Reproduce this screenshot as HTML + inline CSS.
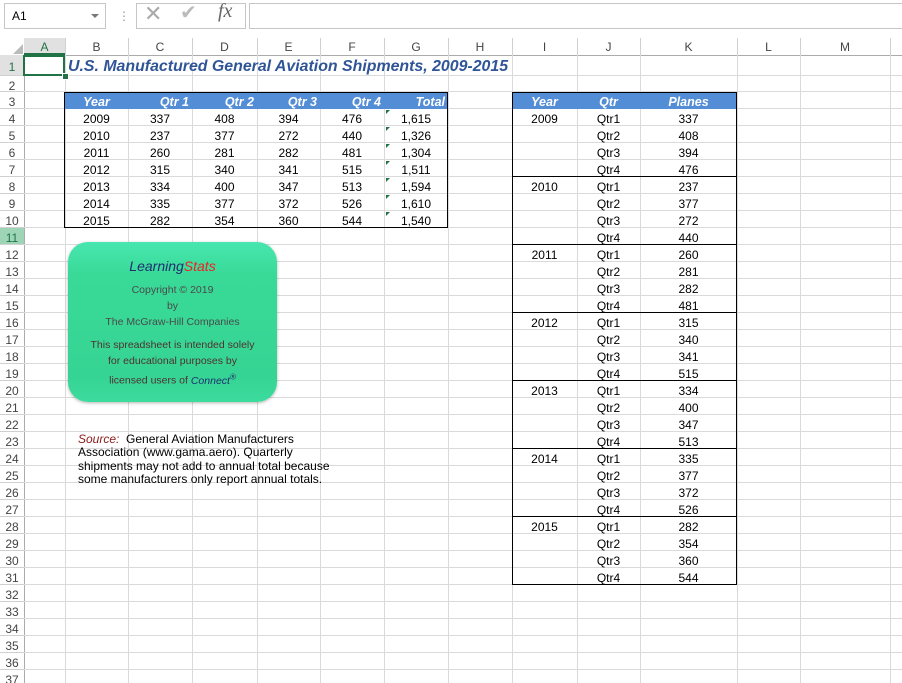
<!DOCTYPE html><html><head><meta charset="utf-8"><style>
html,body{margin:0;width:902px;height:683px;overflow:hidden}
body{background:#fff;font-family:"Liberation Sans",Arial,sans-serif;font-size:12px;position:relative}
.a{position:absolute}
.t{position:absolute;white-space:nowrap;line-height:17px;height:17px}
</style></head><body>
<div class="a" style="left:0;top:0;width:902px;height:38px;background:#fff;border-bottom:1px solid #d4d4d4"></div>
<div class="a" style="left:4px;top:3px;width:100px;height:24px;border:1px solid #c6c6c6"></div>
<div class="t" style="left:12px;top:8px">A1</div>
<div class="a" style="left:91px;top:14px;border:4px solid transparent;border-top:4px solid #777"></div>
<div class="t" style="left:118px;top:8px;color:#999">⋮</div>
<div class="a" style="left:136px;top:3px;width:108px;height:24px;border:1px solid #c6c6c6"></div>
<div class="t" style="left:144px;top:5px;font-size:22px;color:#aaa">✕</div>
<div class="t" style="left:180px;top:5px;font-size:20px;color:#bbb">✔</div>
<div class="t" style="left:218px;top:3px;font-family:'Liberation Serif',serif;font-style:italic;font-size:20px;color:#666">fx</div>
<div class="a" style="left:249px;top:3px;width:660px;height:24px;border:1px solid #c6c6c6"></div>
<div id="g"></div>
<div class="a" style="left:64px;top:92px;width:384px;height:136px;border:1px solid #000;box-sizing:border-box"></div>
<div class="a" style="left:65px;top:93px;width:382px;height:16px;background:#538dd5"></div>
<div class="a" style="left:512px;top:92px;width:225px;height:493px;border:1px solid #000;box-sizing:border-box"></div>
<div class="a" style="left:513px;top:93px;width:223px;height:16px;background:#538dd5"></div>
<div id="c"></div>
<div class="a" style="left:23px;top:55px;width:42px;height:21px;border:2px solid #217346;box-sizing:border-box"></div>
<div class="a" style="left:62px;top:73px;width:5px;height:5px;background:#217346;border:1px solid #fff"></div>
<div class="t" style="left:68px;top:57px;font-size:15.9px;line-height:20px;font-weight:bold;font-style:italic;color:#2f5597">U.S. Manufactured General Aviation Shipments, 2009-2015</div>
<div class="a" style="left:68px;top:242px;width:209px;height:160px;border-radius:20px;background:linear-gradient(#48e6b0,#39da98 20%,#36d494 85%,#3cdc9e);box-shadow:0 1px 3px rgba(0,0,0,.3);text-align:center;color:#4a4a4a;font-size:10.5px;line-height:16px">
<div style="margin-top:14px;font-size:14px;font-style:italic;line-height:20px"><span style="color:#1f2f6f">Learning</span><span style="color:#f02020">Stats</span></div>
<div style="margin-top:6px">Copyright © 2019<br>by<br>The McGraw-Hill Companies</div>
<div style="margin-top:7px;line-height:16px;color:#503030">This spreadsheet is intended solely<br>for educational purposes by<br>licensed users of <i style="color:#1f2f6f">Connect<sup style="font-size:8px">®</sup></i></div>
</div>
<div class="a" style="left:78px;top:433px;width:280px;line-height:13.3px;font-size:12px"><i style="color:#8b1a1a">Source:</i>&nbsp; General Aviation Manufacturers<br>Association (www.gama.aero). Quarterly<br>shipments may not add to annual total because<br>some manufacturers only report annual totals.</div>
<script>
var cols=[[24,65,'A'],[65,128,'B'],[128,192,'C'],[192,257,'D'],[257,320,'E'],[320,384,'F'],[384,448,'G'],[448,512,'H'],[512,577,'I'],[577,640,'J'],[640,737,'K'],[737,800,'L'],[800,890,'M'],[890,960,'']];
function rt(n){return n==1?55:n==2?76:92+(n-3)*17}
var h='';
h+='<div class="a" style="left:0;top:38px;width:902px;height:17px;background:#fff;border-bottom:1px solid #ababab"></div>';
h+='<div class="a" style="left:0;top:38px;width:24px;height:645px;background:#fff;border-right:1px solid #ababab"></div>';
h+='<div class="a" style="left:24px;top:38px;width:41px;height:17px;background:#e1e1e1;border-bottom:2px solid #217346;box-sizing:border-box"></div>';
h+='<div class="a" style="left:0;top:55px;width:24px;height:21px;background:#e1e1e1"></div>';
h+='<div class="a" style="left:0;top:228px;width:24px;height:17px;background:#9fd5b7"></div>';
h+='<div class="a" style="left:13px;top:44px;border:5px solid transparent;border-right-color:#bbb;border-bottom-color:#bbb"></div>';
cols.forEach(function(c){
h+='<div class="a" style="left:'+c[1]+'px;top:55px;width:1px;height:630px;background:#dadada"></div>';
h+='<div class="a" style="left:'+c[1]+'px;top:38px;width:1px;height:17px;background:#d0d0d0"></div>';
h+='<div class="t" style="left:'+c[0]+'px;width:'+(c[1]-c[0])+'px;top:39px;text-align:center;color:'+(c[2]=='A'?'#217346':'#444')+';font-size:12px">'+c[2]+'</div>';
});
for(var n=1;n<=37;n++){var t=rt(n),b=rt(n+1);
h+='<div class="a" style="left:24px;top:'+(b-1)+'px;width:880px;height:1px;background:#dadada"></div>';
h+='<div class="a" style="left:0;top:'+(b-1)+'px;width:24px;height:1px;background:#d0d0d0"></div>';
h+='<div class="t" style="left:0;width:24px;text-align:center;top:'+(t+(n==1?4:1.5))+'px;color:'+(n==1||n==11?'#217346':'#444')+'">'+n+'</div>';}
document.getElementById('g').innerHTML=h;
var c='';
function cell(col,row,txt,al,st){var cc=cols.find(function(x){return x[2]==col});
c+='<div class="t" style="left:'+(cc[0]+3)+'px;width:'+(cc[1]-cc[0]-6)+'px;top:'+(rt(row)+1.5)+'px;text-align:'+al+';'+(st||'')+'">'+txt+'</div>';}
var hs='color:#fff;font-weight:bold;font-style:italic;font-size:12.5px';
cell('B',3,'Year','center',hs);['Qtr 1','Qtr 2','Qtr 3','Qtr 4','Total'].forEach(function(x,i){cell('CDEFG'[i],3,x,'right',hs)});
var d=[[2009,337,408,394,476,'1,615'],[2010,237,377,272,440,'1,326'],[2011,260,281,282,481,'1,304'],[2012,315,340,341,515,'1,511'],[2013,334,400,347,513,'1,594'],[2014,335,377,372,526,'1,610'],[2015,282,354,360,544,'1,540']];
d.forEach(function(r,i){r.forEach(function(v,j){cell('BCDEFG'[j],4+i,v,'center')});
c+='<div class="a" style="left:386px;top:'+(rt(4+i)+1)+'px;border-top:4px solid #217346;border-right:4px solid transparent;width:0;height:0"></div>';});
cell('I',3,'Year','center',hs);cell('J',3,'Qtr','center',hs);cell('K',3,'Planes','center',hs);
d.forEach(function(r,i){var base=4+i*4;cell('I',base,r[0],'center');
if(i>0)c+='<div class="a" style="left:512px;top:'+(rt(base)-1)+'px;width:225px;height:1px;background:#000"></div>';
for(var q=0;q<4;q++){cell('J',base+q,'Qtr'+(q+1),'center');cell('K',base+q,r[q+1],'center');}});
document.getElementById('c').innerHTML=c;
</script>
</body></html>
